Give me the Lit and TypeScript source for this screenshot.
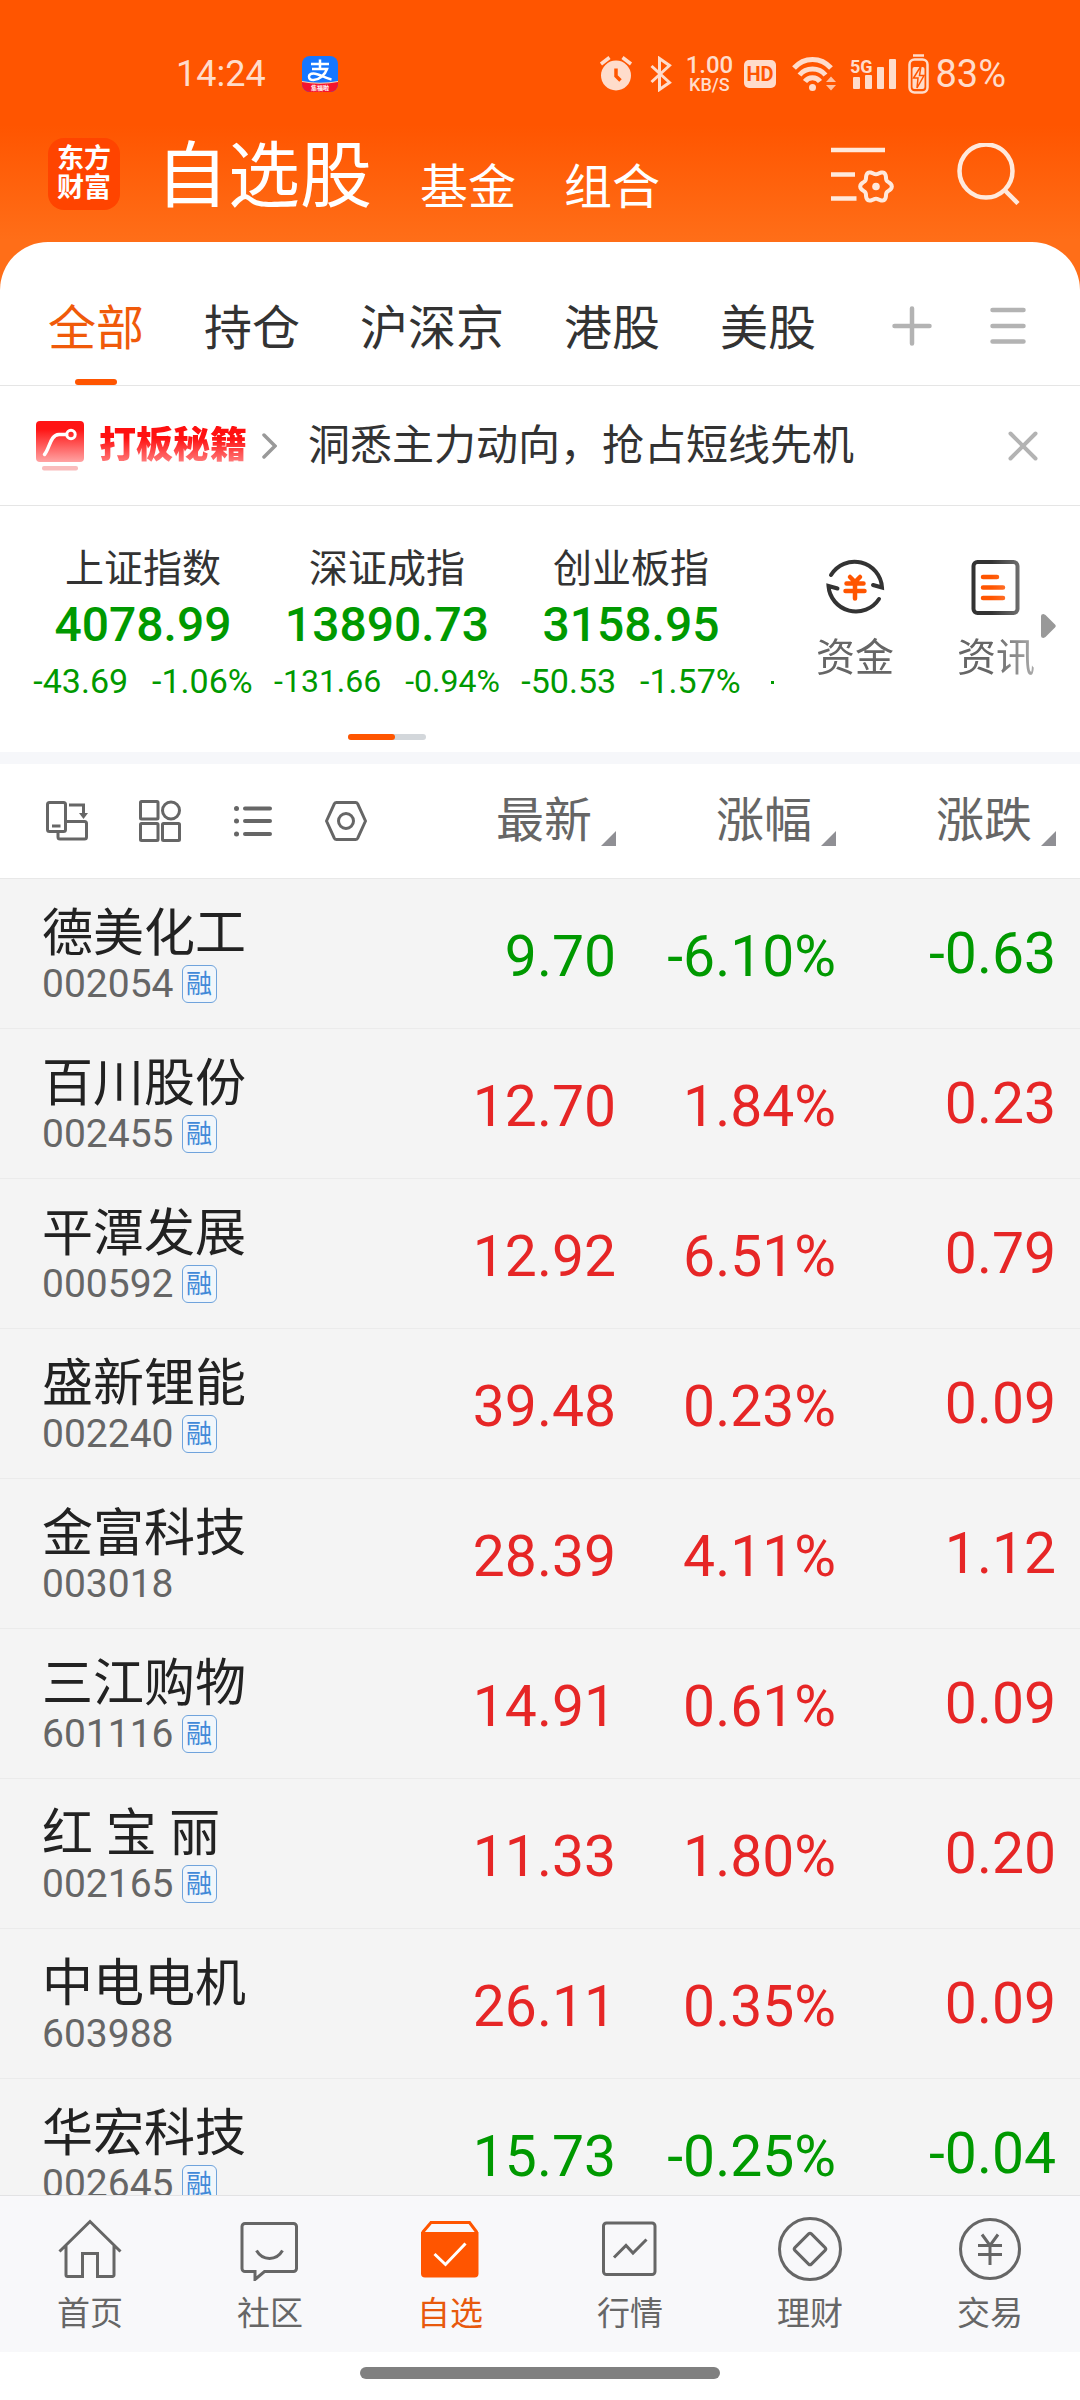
import { LitElement, html, css, svg } from "lit";
import { customElement, property, state } from "lit/decorators.js";
import { classMap } from "lit/directives/class-map.js";

interface Stock {
  name: string;
  code: string;
  margin: boolean;
  price: string;
  percent: string;
  change: string;
}

const STOCKS: Stock[] = [
  { name: "德美化工", code: "002054", margin: true, price: "9.70", percent: "-6.10%", change: "-0.63" },
  { name: "百川股份", code: "002455", margin: true, price: "12.70", percent: "1.84%", change: "0.23" },
  { name: "平潭发展", code: "000592", margin: true, price: "12.92", percent: "6.51%", change: "0.79" },
  { name: "盛新锂能", code: "002240", margin: true, price: "39.48", percent: "0.23%", change: "0.09" },
  { name: "金富科技", code: "003018", margin: false, price: "28.39", percent: "4.11%", change: "1.12" },
  { name: "三江购物", code: "601116", margin: true, price: "14.91", percent: "0.61%", change: "0.09" },
  { name: "红 宝 丽", code: "002165", margin: true, price: "11.33", percent: "1.80%", change: "0.20" },
  { name: "中电电机", code: "603988", margin: false, price: "26.11", percent: "0.35%", change: "0.09" },
  { name: "华宏科技", code: "002645", margin: true, price: "15.73", percent: "-0.25%", change: "-0.04" },
];

const INDEXES = [
  { name: "上证指数", value: "4078.99", change: "-43.69", percent: "-1.06%", small: false },
  { name: "深证成指", value: "13890.73", change: "-131.66", percent: "-0.94%", small: true },
  { name: "创业板指", value: "3158.95", change: "-50.53", percent: "-1.57%", small: false },
];

const GROUPS = ["全部", "持仓", "沪深京", "港股", "美股"];
const COLUMNS = ["最新", "涨幅", "涨跌"];

// Closed outline of a six-lobed gear around (cx, cy).
function gearPath(cx: number, cy: number, radius: number, depth: number): string {
  const points: string[] = [];
  for (let i = 0; i < 72; i++) {
    const a = (i / 72) * Math.PI * 2;
    const r = radius + depth * Math.cos(6 * a);
    points.push(`${(cx + r * Math.cos(a)).toFixed(1)} ${(cy + r * Math.sin(a)).toFixed(1)}`);
  }
  return `M${points.join("L")}Z`;
}

const NAV = [
  {
    label: "首页",
    icon: svg`<path d="M1.5 34.5 32 4.5l30.5 30M8 29v29a1.5 1.5 0 0 0 1.5 1.5H24.500V36.5H39.5V59.5H54.5A1.5 1.5 0 0 0 56 58V29"/>`,
  },
  {
    label: "社区",
    icon: svg`<path d="M7 6.5H55.5a3 3 0 0 1 3 3V51.5a3 3 0 0 1-3 3H26.5L17 62.5V54.5H7a3 3 0 0 1-3-3V9.5a3 3 0 0 1 3-3Z"/><path d="M18.5 33.5c6 10.5 20 10.5 26 0"/>`,
  },
  {
    label: "自选",
    icon: svg`<path d="M4.5 15.5 13 5.5H51.5L59 15.5"/><path class="solid" d="M3 15H60.5V56.5a4 4 0 0 1-4 4H7a4 4 0 0 1-4-4Z"/><path class="light" d="M16.5 37 27.5 47.5 47.5 26.5"/>`,
  },
  {
    label: "行情",
    icon: svg`<rect x="5.5" y="6" width="51.5" height="51.5" rx="3"/><path d="M16 40.5 28 28.5 35 36 48.5 22.5"/>`,
  },
  {
    label: "理财",
    icon: svg`<circle cx="32" cy="32" r="30.5"/><path d="M30.6 16.9a2 2 0 0 1 2.8 0L47.1 30.6a2 2 0 0 1 0 2.8L33.4 47.1a2 2 0 0 1-2.8 0L16.9 33.4a2 2 0 0 1 0-2.8Z"/>`,
  },
  {
    label: "交易",
    icon: svg`<circle cx="32" cy="32" r="29.5"/><path d="M24 17.5 32 28.5 40 17.5M20 28.5H44M20 37.5H44M32 28.5V48"/>`,
  },
];

const base = css`
  * {
    box-sizing: border-box;
  }
  button {
    margin: 0;
    padding: 0;
    border: 0;
    background: none;
    color: inherit;
    font: inherit;
    cursor: pointer;
  }
  svg {
    display: block;
    flex: none;
  }
`;

@customElement("status-bar")
class StatusBar extends LitElement {
  static styles = [
    base,
    css`
      :host {
        display: flex;
        align-items: center;
        justify-content: space-between;
        height: 135px;
        padding: 12px 74px 0 176px;
        color: #ffdccb;
        font-size: 38px;
      }
      .left {
        display: flex;
        align-items: center;
        gap: 36px;
      }
      .time {
        font-size: 36px;
      }
      .right {
        display: flex;
        align-items: center;
        gap: 12px;
      }
      .speed {
        display: flex;
        flex-direction: column;
        align-items: center;
        width: 46px;
        font-weight: 500;
        font-size: 18px;
        line-height: 18px;
      }
      .rate {
        font-size: 24px;
        line-height: 22px;
      }
      .power {
        display: flex;
        align-items: center;
        gap: 6px;
      }
    `,
  ];

  render() {
    return html`
      <div class="left">
        <span class="time">14:24</span>
        <svg width="36" height="36" viewBox="0 0 36 36" role="img" aria-label="支付宝">
          <clipPath id="tile"><rect width="36" height="36" rx="8" /></clipPath>
          <g clip-path="url(#tile)">
            <rect width="36" height="36" fill="#1677ff" />
            <path d="M0 25.5Q18 29 36 25.5V36H0Z" fill="#f5132d" />
            <path d="M0 25.5Q18 29 36 25.5" fill="none" stroke="#ffd9b0" stroke-width="1" />
            <path
              d="M9 8H27M18 3.5V13M10 13H25C23 19 17 24 11.5 24C5.500 24 5.5 17.5 11.5 17.5C17 17.5 22 22 29.5 23.5"
              fill="none"
              stroke="#fff"
              stroke-width="2.5"
            />
            <text x="18" y="34" text-anchor="middle" font-size="6" font-weight="700" fill="#fff">集福啦</text>
          </g>
        </svg>
      </div>
      <div class="right">
        <svg width="38" height="36" viewBox="0 0 38 36" fill="none">
          <circle cx="16" cy="19.5" r="15" fill="currentColor" />
          <path d="M1 8 9.5 1.500M31 8 22.5 1.5" stroke="currentColor" stroke-width="3.5" />
          <path d="M16 12.5V20L20.5 24.5" stroke="#f50" stroke-width="3.5" />
        </svg>
        <svg width="24" height="36" viewBox="0 0 24 36" fill="none" stroke="currentColor" stroke-width="3">
          <path d="M1.5 10 19.5 26.5 9.5 33.5V2.5L19.5 9.5 1.5 26" />
        </svg>
        <span class="speed"><span class="rate">1.00</span><span>KB/S</span></span>
        <svg width="36" height="28" viewBox="0 0 36 28">
          <rect width="32" height="28" rx="5" fill="currentColor" />
          <text x="16" y="21" text-anchor="middle" font-size="20" font-weight="700" fill="#f50">HD</text>
        </svg>
        <svg width="46" height="36" viewBox="0 0 46 36" fill="none" stroke="currentColor" stroke-width="5">
          <path d="M2 12C12 .5 29 .5 39 12M7.5 19C14 11 27 11 33.5 19M13 25.500C16.5 20.5 24.5 20.5 28 25.5" />
          <circle cx="20.5" cy="31.5" r="3.500" fill="currentColor" stroke="none" />
          <path d="M34 26 39 20.5 44 26ZM34 29 39 34.5 44 29Z" fill="currentColor" stroke="none" opacity=".8" />
        </svg>
        <svg width="46" height="34" viewBox="0 0 46 34" fill="currentColor">
          <rect x="3" y="20" width="7" height="12" rx="1" />
          <rect x="15" y="18" width="7" height="14" rx="1" />
          <rect x="27" y="10" width="7" height="22" rx="1" />
          <rect x="39" y="2" width="7" height="30" rx="1" />
          <text x="0" y="16" font-size="18" font-weight="700">5G</text>
        </svg>
        <span class="power">
          <svg width="21" height="40" viewBox="0 0 21 40" fill="none" stroke="currentColor" stroke-width="2.5">
            <path d="M5 1.5H16" />
            <rect x="1.5" y="5.5" width="18" height="33" rx="5" />
            <rect x="4.5" y="13" width="12" height="22" rx="2" fill="currentColor" stroke="none" />
            <path d="M13 12 5.5 24H10L9 34 16 21.5H11.5Z" fill="currentColor" stroke="#f50" stroke-width="1.5" />
          </svg>
          <span>83%</span>
        </span>
      </div>
    `;
  }
}

@customElement("index-strip")
class IndexStrip extends LitElement {
  static styles = [
    base,
    css`
      :host {
        display: flex;
        justify-content: space-between;
        background: #fff;
        border-bottom: 12px solid #f6f7fa;
      }
      .panel {
        flex: 0 1 774px;
        min-width: 0;
        padding: 38px 0 12px 21px;
        overflow: hidden;
      }
      .indexes {
        display: flex;
      }
      .index {
        flex: none;
        width: 244px;
        display: flex;
        flex-direction: column;
        align-items: center;
        color: #009900;
      }
      .name {
        color: #333;
        font-size: 39px;
        line-height: 50px;
      }
      .value {
        font-size: 48px;
        font-weight: 500;
        line-height: 62px;
      }
      .sub {
        display: flex;
        gap: 24px;
        font-size: 34px;
        line-height: 50px;
        white-space: nowrap;
      }
      .sub.small {
        font-size: 32px;
      }
      .next {
        flex: none;
        align-self: flex-end;
        width: 4px;
        height: 3px;
        margin: 0 0 22px 18px;
        background: #009900;
      }
      .pager {
        width: 78px;
        height: 6px;
        margin: 28px 0 0 327px;
        border-radius: 3px;
        background: #d3d7db;
      }
      .page {
        width: 47px;
        height: 6px;
        border-radius: 3px;
        background: #ff5500;
      }
      .tools {
        flex: none;
        display: flex;
        gap: 6px;
        padding-right: 24px;
      }
      .fade {
        display: flex;
        align-items: flex-start;
        gap: 63px;
        padding-top: 51px;
        mask-image: linear-gradient(90deg, #000 80%, rgba(0, 0, 0, 0.55));
      }
      .tool {
        display: flex;
        flex-direction: column;
        align-items: center;
        gap: 21px;
        color: #666;
        font-size: 39px;
        line-height: 40px;
      }
      .more {
        align-self: flex-start;
        padding-top: 108px;
      }
    `,
  ];

  render() {
    return html`
      <div class="panel">
        <div class="indexes">
          ${INDEXES.map(
            (item) => html`
              <button class="index">
                <span class="name">${item.name}</span>
                <span class="value">${item.value}</span>
                <span class=${classMap({ sub: true, small: item.small })}>
                  <span>${item.change}</span><span>${item.percent}</span>
                </span>
              </button>
            `
          )}
          <span class="next"></span>
        </div>
        <div class="pager"><div class="page"></div></div>
      </div>
      <div class="tools">
        <div class="fade">
          <button class="tool">
            <svg width="60" height="60" viewBox="0 0 60 60" fill="none" stroke="#333" stroke-width="4" stroke-linecap="round">
              <path d="M6 18A27.5 27.5 0 0 1 57 30.5L48 28" />
              <path d="M54 42A27.5 27.5 0 0 1 3.5 29L12.5 31.5" />
              <path d="M25 20 30 25 35 20M21.5 26.5H38.5M20.5 34H39.5M30 25V41.5" stroke="#ff5500" stroke-width="4.5" />
            </svg>
            资金
          </button>
          <button class="tool">
            <svg width="60" height="60" viewBox="0 0 60 60" fill="none" stroke="#333" stroke-width="4" stroke-linecap="round">
              <rect x="7.5" y="5" width="44" height="51" rx="4" />
              <path d="M17 20H31M17 30.5H37M17 41H37" stroke="#ff5500" stroke-width="4.5" />
            </svg>
            资讯
          </button>
        </div>
        <button class="more" aria-label="更多">
          <svg width="15" height="24" viewBox="0 0 15 24">
            <path d="M0 2Q0 0 2.5 0L4.5 1 14 10.5Q15.5 12 14 13.5L4.5 23 2.5 24Q0 24 0 22Z" fill="#999" />
          </svg>
        </button>
      </div>
    `;
  }
}

@customElement("stock-table")
class StockTable extends LitElement {
  static styles = [
    base,
    css`
      :host {
        display: block;
        overflow: hidden;
        background: #f4f4f4;
      }
      .table {
        width: 100%;
        table-layout: fixed;
        border-collapse: separate;
        border-spacing: 0;
      }
      .num {
        width: 220px;
        text-align: right;
      }
      .num.last {
        width: 244px;
        padding-right: 24px;
      }
      .head th {
        height: 115px;
        background: #fff;
        border-bottom: 1px solid #e8e8e8;
        color: #666;
        font-weight: 400;
      }
      th,
      td {
        padding: 0;
      }
      .views {
        display: flex;
        gap: 51px;
        padding-left: 46px;
      }
      .sort {
        display: inline-flex;
        align-items: center;
        gap: 9px;
        font-size: 48px;
        line-height: 50px;
      }
      .mark {
        align-self: flex-end;
      }
      .row td {
        height: 150px;
        border-bottom: 1px solid #ebebeb;
      }
      .row .stock {
        padding-left: 42px;
      }
      .name {
        color: #222;
        font-size: 51px;
        line-height: 60px;
        white-space: nowrap;
      }
      .meta {
        display: flex;
        align-items: center;
        gap: 8px;
        color: #666;
        font-size: 39px;
        line-height: 40px;
      }
      .badge {
        display: grid;
        place-items: center;
        width: 35px;
        height: 38px;
        border: 1px solid #6fa3dc;
        border-radius: 6px;
        background: #f1f6fb;
        color: #4189d8;
        font-size: 26px;
        line-height: 26px;
      }
      .row .num {
        color: #e62626;
        font-size: 57px;
        line-height: 66px;
      }
      .row .num:not(.last) {
        padding-top: 6px;
      }
      .row.down .num {
        color: #009900;
      }
    `,
  ];

  render() {
    return html`
      <table class="table">
        <thead>
          <tr class="head">
            <th>
              <div class="views">
                <button aria-label="横屏">
                  <svg width="42" height="42" viewBox="0 0 42 42" fill="none" stroke="#666" stroke-width="3">
                    <rect x="1.5" y="2.5" width="18" height="29" rx="2" />
                    <path d="M6 26H14.5M19.5 21.5H38.5a2 2 0 0 1 2 2V37a2 2 0 0 1-2 2H14a2 2 0 0 1-2-2V31.5M23 5H37.5V14" />
                    <path d="M33 13H42L37.5 19Z" fill="#666" stroke="none" />
                  </svg>
                </button>
                <button aria-label="宫格">
                  <svg width="42" height="42" viewBox="0 0 42 42" fill="none" stroke="#666" stroke-width="3">
                    <rect x="1.5" y="1.5" width="17.500" height="17.5" rx="1" />
                    <circle cx="32" cy="10.5" r="8.5" />
                    <rect x="1.5" y="23.5" width="17.500" height="17" rx="1" />
                    <rect x="23.5" y="23.5" width="17" height="17" rx="1" />
                  </svg>
                </button>
                <button aria-label="列表">
                  <svg width="42" height="42" viewBox="0 0 42 42" fill="none" stroke="#666" stroke-width="4" stroke-linecap="round">
                    <path d="M13 8.5H38M13 21H38M13 34H38" />
                    <path d="M4.5 8.5h.01M4.5 21h.01M4.5 34h.01" stroke-width="5" />
                  </svg>
                </button>
                <button aria-label="设置">
                  <svg width="42" height="42" viewBox="0 0 42 42" fill="none" stroke="#666" stroke-width="3" stroke-linejoin="round">
                    <path d="M11.5 2.5H30.5Q32 2.5 32.6 3.6L40.5 21 32.6 38.4Q32 39.5 30.5 39.5H11.5Q10 39.5 9.4 38.4L1.5 21 9.4 3.6Q10 2.5 11.5 2.5Z" />
                    <circle cx="21" cy="21" r="7.5" />
                  </svg>
                </button>
              </div>
            </th>
            ${COLUMNS.map(
              (label, i) => html`
                <th class=${classMap({ num: true, last: i === 2 })} scope="col">
                  <button class="sort">
                    ${label}
                    <svg class="mark" width="15" height="15" viewBox="0 0 15 15">
                      <path d="M15 0V15H0Z" fill="#8f8f94" />
                    </svg>
                  </button>
                </th>
              `
            )}
          </tr>
        </thead>
        <tbody>
          ${STOCKS.map(
            (s) => html`
              <tr class=${classMap({ row: true, down: s.change.startsWith("-") })}>
                <td class="stock">
                  <div class="name">${s.name}</div>
                  <div class="meta">
                    <span>${s.code}</span>
                    ${s.margin ? html`<span class="badge">融</span>` : ""}
                  </div>
                </td>
                <td class="num">${s.price}</td>
                <td class="num">${s.percent}</td>
                <td class="num last">${s.change}</td>
              </tr>
            `
          )}
        </tbody>
      </table>
    `;
  }
}

@customElement("bottom-nav")
class BottomNav extends LitElement {
  @property() active = "自选";

  static styles = [
    base,
    css`
      :host {
        display: block;
        background: #fff;
      }
      .nav {
        display: flex;
        padding: 21px 0 18px;
        border-top: 1px solid #e2e2e4;
        background: #f8f8fa;
      }
      .item {
        flex: 1;
        display: flex;
        flex-direction: column;
        align-items: center;
        gap: 13px;
        color: #666;
        font-size: 33px;
        line-height: 40px;
        text-decoration: none;
      }
      .item.active {
        color: #e8590c;
      }
      .icon {
        fill: none;
        stroke: currentColor;
        stroke-width: 3px;
      }
      .active .icon {
        stroke: #ff5500;
      }
      .solid {
        fill: #ff5500;
        stroke: none;
      }
      .light {
        stroke: #fff;
      }
      .gesture {
        width: 33.333%;
        height: 12px;
        margin: 15px auto 21px;
        border-radius: 6px;
        background: #808080;
      }
    `,
  ];

  render() {
    return html`
      <nav class="nav">
        ${NAV.map(
          (n) => html`
            <a class=${classMap({ item: true, active: n.label === this.active })} href="#">
              <svg class="icon" width="64" height="64" viewBox="0 0 64 64">${n.icon}</svg>
              ${n.label}
            </a>
          `
        )}
      </nav>
      <div class="gesture"></div>
    `;
  }
}

@customElement("app-root")
class AppRoot extends LitElement {
  @state() private group = "全部";
  @state() private bannerOpen = true;

  static styles = [
    base,
    css`
      :host {
        display: flex;
        flex-direction: column;
        height: 100vh;
        overflow: hidden;
        background: #fff;
        color: #333;
        font-family: Roboto, "Noto Sans CJK SC", sans-serif;
      }
      .top {
        flex: none;
        background: linear-gradient(#ff5500 125px, #ff6e18 240px);
      }
      .header {
        display: flex;
        align-items: center;
        gap: 36px;
        padding: 0 60px 29px 48px;
        color: #fff;
      }
      .logo {
        display: grid;
        place-content: center;
        width: 72px;
        height: 72px;
        border-radius: 16px;
        background: #ff4400;
        font-size: 27px;
        font-weight: 700;
        line-height: 29px;
        text-align: center;
      }
      .sections {
        flex: 1;
        display: flex;
        align-items: flex-end;
        gap: 48px;
        padding-top: 6px;
      }
      .section {
        font-size: 48px;
        line-height: 50px;
      }
      .section.current {
        font-size: 72px;
        line-height: 72px;
      }
      .actions {
        display: flex;
        gap: 63px;
      }
      .groups {
        display: flex;
        gap: 60px;
        padding: 0 54px 0 48px;
        border-bottom: 1px solid #e5e5e5;
        border-radius: 48px 48px 0 0;
        background: #fff;
      }
      .group {
        display: flex;
        flex-direction: column;
        align-items: center;
        gap: 18px;
        padding-top: 55px;
        font-size: 48px;
        line-height: 64px;
      }
      .group::after {
        content: "";
        width: 42px;
        height: 6px;
        border-radius: 3px;
      }
      .group.active {
        color: #f05a0a;
      }
      .group.active::after {
        background: #ff5500;
      }
      .edit {
        display: flex;
        align-self: flex-start;
        gap: 58px;
        margin-left: auto;
        padding-top: 64px;
      }
      .banner {
        flex: none;
        display: flex;
        align-items: center;
        height: 120px;
        padding: 0 42px 0 36px;
        border-bottom: 1px solid #e5e5e5;
      }
      .promo {
        display: flex;
        align-items: center;
        gap: 15px;
      }
      .brand {
        background: linear-gradient(#ff1010 30%, #ff8c8c);
        background-clip: text;
        color: transparent;
        font-size: 37px;
        font-weight: 900;
        line-height: 40px;
      }
      .message {
        flex: 1;
        padding-left: 31px;
        font-size: 42px;
        line-height: 48px;
      }
      .list {
        flex: 1 1 0;
        min-height: 0;
      }
      .fixed {
        flex: none;
      }
    `,
  ];

  render() {
    return html`
      <div class="top">
        <status-bar></status-bar>
        <header class="header">
          <div class="logo"><span>东方</span><span>财富</span></div>
          <div class="sections">
            <button class="section current">自选股</button>
            <button class="section">基金</button>
            <button class="section">组合</button>
          </div>
          <div class="actions">
            <button aria-label="管理">
              <svg width="63" height="62" viewBox="0 0 63 62" fill="none" stroke="#ffe9dc" stroke-width="4.5">
                <path d="M0 7H54M0 31.5H24M0 55.5H25.5" />
                <path d=${gearPath(45, 43.5, 14, 1.8)} stroke-width="4" />
                <circle cx="45" cy="43.5" r="3.8" fill="#ffe9dc" stroke="none" />
              </svg>
            </button>
            <button aria-label="搜索">
              <svg width="63" height="62" viewBox="0 0 63 62" fill="none" stroke="#ffe9dc" stroke-width="4.5">
                <circle cx="29" cy="28" r="26.5" />
                <path d="M47 46.5 61 60.5" />
              </svg>
            </button>
          </div>
        </header>
        <nav class="groups">
          ${GROUPS.map(
            (g) => html`
              <button class=${classMap({ group: true, active: g === this.group })} @click=${() => (this.group = g)}>${g}</button>
            `
          )}
          <div class="edit">
            <button aria-label="添加">
              <svg width="40" height="40" viewBox="0 0 40 40" stroke="#b3b3b3" stroke-width="4.5" stroke-linecap="round">
                <path d="M2.5 20H37.5M20 2.5V37.5" />
              </svg>
            </button>
            <button aria-label="菜单">
              <svg width="36" height="40" viewBox="0 0 36 40" stroke="#b3b3b3" stroke-width="4.5" stroke-linecap="round">
                <path d="M2.5 4H33.5M2.5 20H33.5M2.5 35.5H33.5" />
              </svg>
            </button>
          </div>
        </nav>
      </div>
      ${this.bannerOpen
        ? html`
            <section class="banner">
              <button class="promo">
                <svg width="48" height="50" viewBox="0 0 48 50" fill="none">
                  <linearGradient id="red" x2="0" y2="1">
                    <stop offset=".2" stop-color="#ff1414" />
                    <stop offset="1" stop-color="#ffa3a3" />
                  </linearGradient>
                  <rect width="48" height="41" rx="4" fill="url(#red)" />
                  <rect x="6" y="45" width="36" height="4.5" rx="2" fill="#f9bcbc" />
                  <path d="M8.5 33.5C14 27 14 14 23 13.5H30.5" stroke="#fff" stroke-width="3.5" stroke-linecap="round" />
                  <circle cx="35" cy="13.5" r="4.2" stroke="#fff" stroke-width="3" />
                </svg>
                <span class="brand">打板秘籍</span>
                <svg width="15" height="26" viewBox="0 0 15 26" fill="none" stroke="#999" stroke-width="3.5" stroke-linecap="round">
                  <path d="M2 2 13 13 2 24" />
                </svg>
              </button>
              <span class="message">洞悉主力动向，抢占短线先机</span>
              <button aria-label="关闭" @click=${() => (this.bannerOpen = false)}>
                <svg width="30" height="30" viewBox="0 0 30 30" stroke="#b3b3b3" stroke-width="4" stroke-linecap="round">
                  <path d="M2.5 2.5 27.5 27.5M27.5 2.5 2.5 27.5" />
                </svg>
              </button>
            </section>
          `
        : ""}
      <index-strip class="fixed"></index-strip>
      <stock-table class="list"></stock-table>
      <bottom-nav class="fixed"></bottom-nav>
    `;
  }
}
